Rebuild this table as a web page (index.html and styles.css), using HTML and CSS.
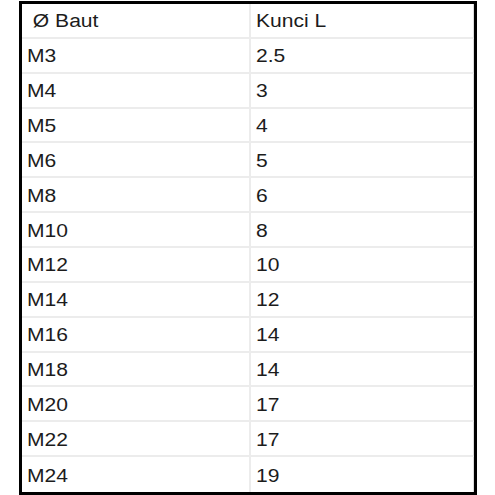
FILE: index.html
```html
<!DOCTYPE html>
<html>
<head>
<meta charset="utf-8">
<link rel="stylesheet" href="styles.css">
</head>
<body>
<div class="table">
  <div class="cell head first"><span class="t">&nbsp;Ø Baut</span></div><div class="cell head"><span class="t">Kunci L</span></div>
  <div class="cell first"><span class="t">M3</span></div><div class="cell"><span class="t">2.5</span></div>
  <div class="cell first"><span class="t">M4</span></div><div class="cell"><span class="t">3</span></div>
  <div class="cell first"><span class="t">M5</span></div><div class="cell"><span class="t">4</span></div>
  <div class="cell first"><span class="t">M6</span></div><div class="cell"><span class="t">5</span></div>
  <div class="cell first"><span class="t">M8</span></div><div class="cell"><span class="t">6</span></div>
  <div class="cell first"><span class="t">M10</span></div><div class="cell"><span class="t">8</span></div>
  <div class="cell first"><span class="t">M12</span></div><div class="cell"><span class="t">10</span></div>
  <div class="cell first"><span class="t">M14</span></div><div class="cell"><span class="t">12</span></div>
  <div class="cell first"><span class="t">M16</span></div><div class="cell"><span class="t">14</span></div>
  <div class="cell first"><span class="t">M18</span></div><div class="cell"><span class="t">14</span></div>
  <div class="cell first"><span class="t">M20</span></div><div class="cell"><span class="t">17</span></div>
  <div class="cell first"><span class="t">M22</span></div><div class="cell"><span class="t">17</span></div>
  <div class="cell first last"><span class="t">M24</span></div><div class="cell last"><span class="t">19</span></div>
</div>
</body>
</html>
```

FILE: styles.css
```css
html, body {
  margin: 0;
  padding: 0;
  background: #ffffff;
}

body {
  padding: 1px 0 0 19px;
  font-family: "Liberation Sans", Arial, sans-serif;
  color: #1c1c1c;
}

.table {
  box-sizing: border-box;
  width: 458px;
  height: 494px;
  border: 3px solid #000;
  display: grid;
  grid-template-columns: 229px 1fr;
  grid-template-rows: repeat(14, 1fr);
}

.cell {
  display: flex;
  align-items: center;
  border-bottom: 2px solid #ececec;
  border-right: 1px solid #dcdcdc;
  padding: 2px 0 0 5px;
  font-size: 18px;
  line-height: 1;
  overflow: hidden;
  white-space: nowrap;
}

.cell.first {
  border-right: 2px solid #ececec;
}

.cell.last {
  border-bottom: none;
}

.t {
  display: inline-block;
  transform: scaleX(1.17);
  transform-origin: left center;
}
```
